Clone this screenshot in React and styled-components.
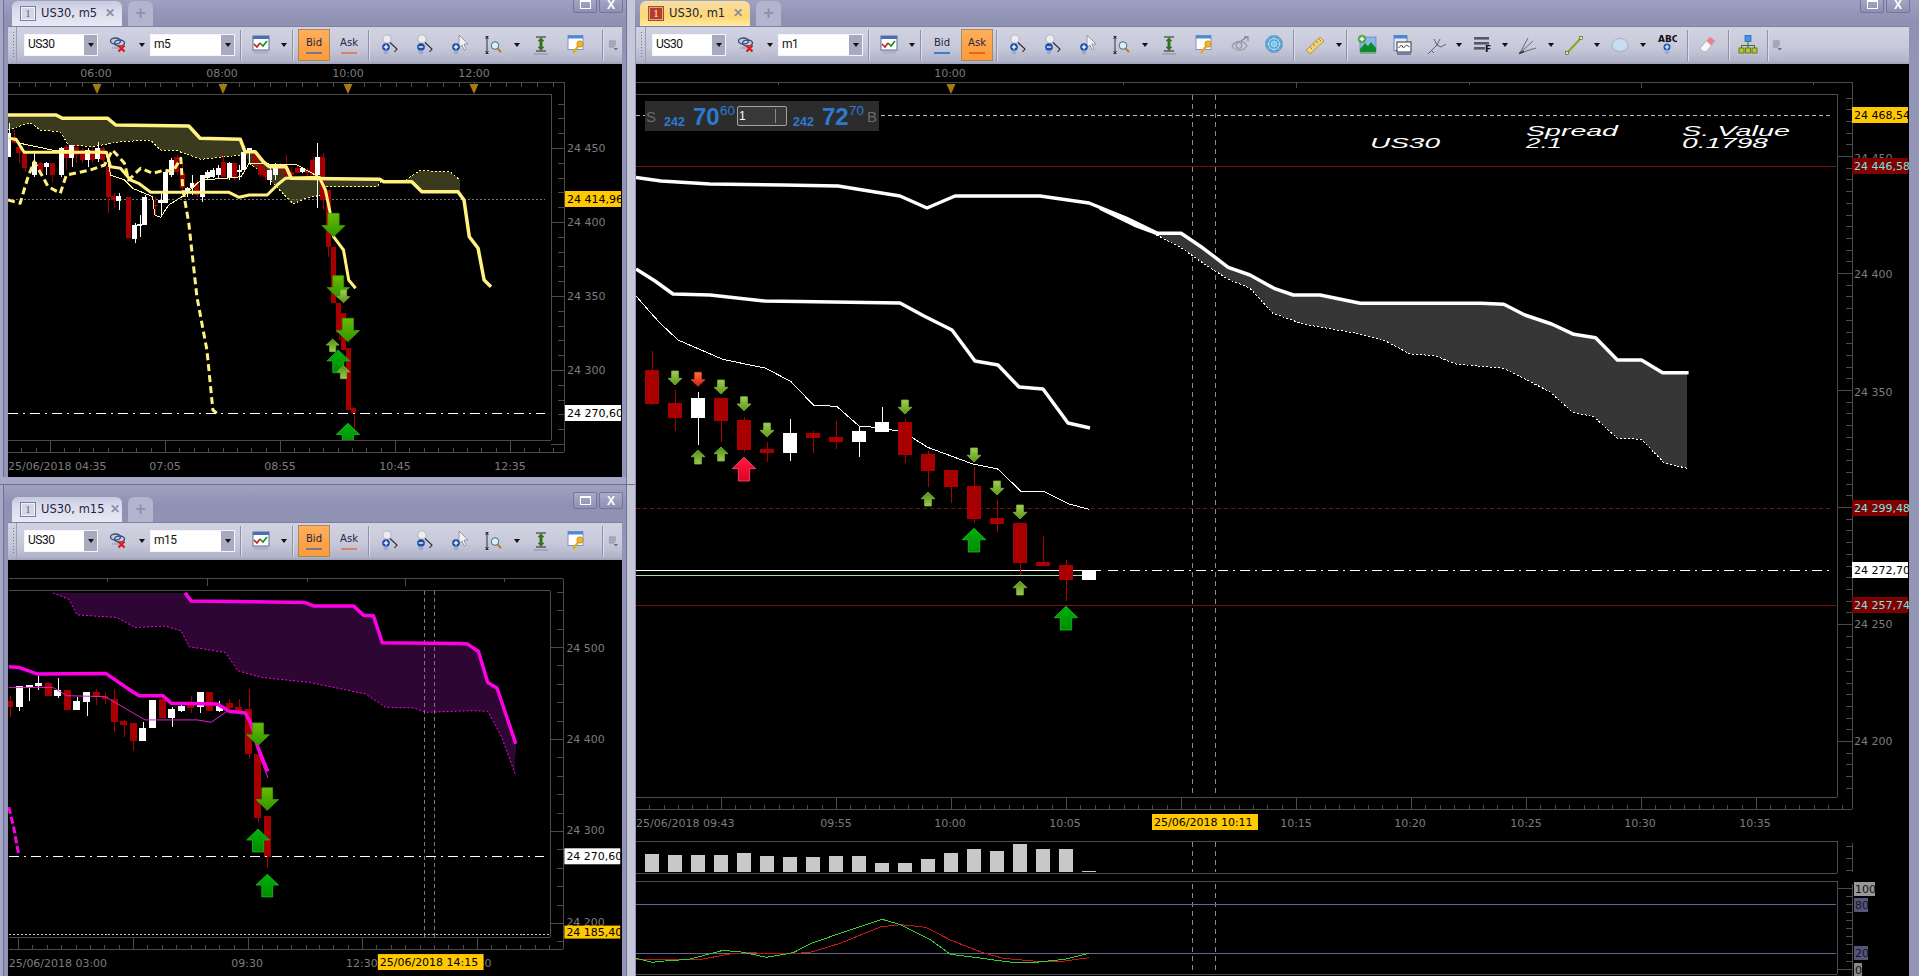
import React from "react";
import styled, { createGlobalStyle } from "styled-components";

const Global = createGlobalStyle`
  html, body { margin: 0; padding: 0; background: #000; overflow: hidden; }
  #root { width: 1919px; height: 976px; }
`;

const Page = styled.div`
  display: grid;
  grid-template-columns: 635px 1fr;
  width: 1919px;
  height: 976px;
  overflow: hidden;
  background: #b4b6ce;
  font-family: "DejaVu Sans", sans-serif;
`;
const LeftColumn = styled.div`
  display: flex;
  flex-direction: column;
  min-height: 0;
  background: #a6a9c6;
  box-shadow: inset -8px 0 0 #c6c8da, inset -9px 0 0 #6f7296;
`;
const Window = styled.section`
  display: flex;
  flex-direction: column;
  height: ${(p) => p.$h}px;
  margin-top: ${(p) => p.$top || 0}px;
  padding: ${(p) => p.$pad};
  box-sizing: border-box;
  background: linear-gradient(180deg, #9ea1c0, #8e91b2 20px, #9295b5 60px);
  border-top: ${(p) => (p.$lined ? "1px solid #6d7095" : "none")};
  box-shadow: ${(p) =>
    p.$side
      ? "inset -8px 0 0 #c6c8da, inset -9px 0 0 #6f7296, inset 3px 0 0 #a6a9c6, inset 4px 0 0 #6d7095"
      : "none"};
  flex: none;
`;
const TabRow = styled.div`
  display: flex;
  align-items: stretch;
  flex: none;
  height: ${(p) => p.$h}px;
  padding-top: ${(p) => p.$top}px;
  padding-left: ${(p) => p.$left}px;
  box-sizing: border-box;
`;
const Tab = styled.div`
  display: flex;
  align-items: center;
  width: 110px;
  box-sizing: border-box;
  padding: 0 0 1px 8px;
  gap: 5px;
  border-radius: 6px 6px 0 0;
  font-size: 11.5px;
  color: #23253e;
  white-space: nowrap;
  background: ${(p) =>
    p.$hot
      ? "linear-gradient(180deg, #f5dfa4 0, #fbd98a 35%, #ffd874 65%, #ffeaa8 100%)"
      : "linear-gradient(180deg, #c6c8de 0, #dcdded 40%, #e8e9f3 100%)"};
`;
const TabBadge = styled.span`
  display: flex;
  align-items: center;
  justify-content: center;
  width: 14px;
  height: 13px;
  flex: none;
  font: 10px "Liberation Serif", serif;
  color: ${(p) => (p.$hot ? "#fff" : "#555a78")};
  background: ${(p) => (p.$hot ? "#bb3a24" : "#d6d7e6")};
  border: 1px solid ${(p) => (p.$hot ? "#8a5a40" : "#7b7e9c")};
  box-shadow: inset 0 0 0 1px ${(p) => (p.$hot ? "#e8a080" : "#f2f2f8")};
`;
const TabClose = styled.span`
  margin-left: auto;
  margin-right: 7px;
  font: bold 12px "Liberation Sans", sans-serif;
  color: #8a8da6;
`;
const PlusTab = styled.div`
  width: 25px;
  margin-left: 6px;
  display: flex;
  align-items: center;
  justify-content: center;
  border-radius: 6px 6px 0 0;
  background: #b3b5cf;
  color: #8f92ad;
  font: bold 18px "Liberation Sans", sans-serif;
`;
const WinButtons = styled.div`
  display: flex;
  gap: 2px;
  margin-left: auto;
  margin-right: ${(p) => p.$right}px;
  margin-top: -5px;
  height: 17px;
  align-self: flex-start;
`;
const WinButton = styled.div`
  width: 24px;
  height: 17px;
  box-sizing: border-box;
  display: flex;
  align-items: center;
  justify-content: center;
  border: 1px solid #73769a;
  border-radius: 2px;
  background: linear-gradient(180deg, #a9abc7, #8d90b1);
  color: #fff;
  font: bold 12px "Liberation Sans", sans-serif;
`;
const MinGlyph = styled.span`
  width: 9px;
  height: 6px;
  border: 1px solid #fff;
  border-top-width: 2px;
`;

const Toolbar = styled.div`
  display: flex;
  align-items: center;
  flex: none;
  height: 38px;
  box-sizing: border-box;
  padding-bottom: 1px;
  background: linear-gradient(180deg, #d2d3e2 0, #c7c9da 55%, #b2b4c9 92%, #9fa1b8 100%);
  border-top: 1px solid #7d80a2;
`;
const Grip = styled.div`
  width: ${(p) => p.$w}px;
  height: 100%;
  box-sizing: border-box;
  margin-right: ${(p) => p.$gap}px;
  border-right: 1px solid #9c9eb6;
  flex: none;
  position: relative;
  &::before {
    content: "";
    display: block;
    width: 1px;
    height: 26px;
    margin: 5px 0 0 5px;
    background: repeating-linear-gradient(180deg, #777a96 0 1px, transparent 1px 3px);
  }
`;
const Combo = styled.div`
  width: ${(p) => p.$w}px;
  height: 22px;
  box-sizing: border-box;
  flex: none;
  display: flex;
  align-items: stretch;
  border: 1px solid #f4f4fa;
  background: #fff;
`;
const ComboText = styled.span`
  flex: 1;
  padding-left: 3px;
  font: 12px/19px Roboto, sans-serif;
  letter-spacing: -0.5px;
  color: #111;
`;
const ComboDrop = styled.span`
  width: 13px;
  display: flex;
  align-items: center;
  justify-content: center;
  background: #a9aac0;
`;
const Caret = styled.span`
  display: block;
  width: 0;
  height: 0;
  flex: none;
  border-left: 3.5px solid transparent;
  border-right: 3.5px solid transparent;
  border-top: 4px solid #111;
`;
const CaretBox = styled.div`
  width: ${(p) => p.$w}px;
  margin-right: ${(p) => p.$gap || 0}px;
  flex: none;
  display: flex;
  justify-content: center;
`;
const Sep = styled.div`
  width: ${(p) => p.$w || 6}px;
  height: 31px;
  margin-left: ${(p) => p.$gap || 0}px;
  flex: none;
  position: relative;
  &::after {
    content: "";
    display: block;
    width: 1px;
    height: 100%;
    margin: 0 auto;
    background: #8f91aa;
    box-shadow: 1px 0 0 #dcdde8;
  }
`;
const Tool = styled.div`
  width: ${(p) => p.$w}px;
  height: 26px;
  flex: none;
  display: flex;
  align-items: center;
  justify-content: center;
`;
const PriceSwitch = styled.div`
  width: ${(p) => p.$w}px;
  flex: none;
  display: flex;
  justify-content: center;
`;
const PriceButton = styled.div`
  width: 32px;
  height: 32px;
  box-sizing: border-box;
  display: flex;
  flex-direction: column;
  align-items: center;
  padding-top: 7px;
  font-size: 10px;
  line-height: 12px;
  color: #24264a;
  border: 1px solid ${(p) => (p.$on ? "#a48a5c" : "transparent")};
  background: ${(p) => (p.$on ? "linear-gradient(180deg, #ffae5c, #fd9a38)" : "transparent")};
`;
const PriceBar = styled.span`
  display: block;
  width: 16px;
  height: 2px;
  margin-top: 3px;
  background: ${(p) => p.$c};
`;

const ChartBox = styled.div`
  position: relative;
  flex: 1;
  min-height: 0;
  background: #000;
  overflow: hidden;
`;
const ChartSvg = styled.svg`
  display: block;
  width: 100%;
  height: 100%;
`;
const DefsSvg = styled.svg`
  position: absolute;
  width: 0;
  height: 0;
`;
const AxisText = styled.text`
  font: 11px "DejaVu Sans", sans-serif;
  fill: #7c7c7c;
`;
const TagText = styled.text`
  font: 11px "DejaVu Sans", sans-serif;
  fill: ${(p) => p.$c};
`;
const ScaleText = styled.text`
  font: 11px "DejaVu Sans", sans-serif;
  fill: ${(p) => p.$c};
`;
const SpreadText = styled.text`
  font: italic 15px "Liberation Sans", sans-serif;
  fill: #fff;
`;
const IconText = styled.text`
  font: bold 9px "DejaVu Sans", sans-serif;
  fill: #111;
`;

const Widget = styled.div`
  position: absolute;
  left: 9px;
  top: 37px;
  width: 234px;
  height: 30px;
  display: flex;
  align-items: center;
  background: #2c2c2c;
  font-family: "Liberation Sans", sans-serif;
  color: #2b7bd3;
`;
const WidgetSide = styled.span`
  width: ${(p) => p.$w}px;
  padding-left: ${(p) => p.$l}px;
  box-sizing: border-box;
  font-size: 15px;
  color: #6a6a6a;
  flex: none;
`;
const Quote = styled.div`
  display: flex;
  width: ${(p) => p.$w}px;
  margin-left: ${(p) => p.$l}px;
  flex: none;
  align-items: flex-start;
  height: 26px;
`;
const QuoteSmall = styled.span`
  font-size: 12.5px;
  font-weight: bold;
  width: 29px;
  padding-top: 12px;
  flex: none;
`;
const QuoteBig = styled.span`
  font-size: 24px;
  font-weight: bold;
  line-height: 27px;
  width: 27px;
  flex: none;
`;
const QuoteSup = styled.span`
  font-size: 13.5px;
  line-height: 15px;
  width: 16px;
  flex: none;
`;
const Qty = styled.div`
  width: 50px;
  height: 20px;
  box-sizing: border-box;
  margin-left: 1px;
  flex: none;
  display: flex;
  align-items: center;
  padding-left: 1px;
  border: 1px solid #a5a5a5;
  border-radius: 2px;
  background: #383838;
  color: #fff;
  font-size: 12px;
`;
const QtySpin = styled.span`
  margin-left: auto;
  width: 10px;
  height: 14px;
  border-left: 1px solid #888;
`;

/* ---------- icons ---------- */
const Svg = ({ children, w = 22, h = 22 }) => (
  <svg width={w} height={h} viewBox="0 0 22 22" aria-hidden="true">
    {children}
  </svg>
);
const Blue = ({ x, y, minus }) => (
  <g>
    <circle cx={x} cy={y} r="3.6" fill="#1b4fb4" stroke="#163a80" strokeWidth=".5" />
    <path d={`M${x - 2.2} ${y}h4.4`} stroke="#fff" strokeWidth="1.3" />
    {!minus && <path d={`M${x} ${y - 2.2}v4.4`} stroke="#fff" strokeWidth="1.3" />}
    <circle cx={x} cy={y + 5} r="2.4" fill="#7c92c6" opacity=".5" />
  </g>
);
const Mag = ({ minus }) => (
  <Svg>
    <circle cx="8" cy="5" r="4.2" fill="#ececf2" stroke="#b2b2be" />
    <path d="M11 8.500l7 6.500-2.500 3" fill="none" stroke="#2a2a30" strokeWidth="1.100" />
    <Blue x={7} y={13} minus={minus} />
  </Svg>
);
const IconLink = () => (
  <Svg>
    <ellipse cx="8.500" cy="7" rx="5" ry="3" fill="none" stroke="#35507c" strokeWidth="1.400" />
    <ellipse cx="12.500" cy="9" rx="5" ry="3" fill="none" stroke="#35507c" strokeWidth="1.400" />
    <path d="M5 14h9" stroke="#a3a5bc" strokeWidth="1.500" />
    <path d="M11.500 11.500l6 6m0-6l-6 6" stroke="#e01818" strokeWidth="2.300" />
  </Svg>
);
const IconChart = () => (
  <Svg>
    <rect x="3" y="2" width="16" height="14" fill="#fff" stroke="#5a6f9c" />
    <rect x="3" y="2" width="16" height="3" fill="#4a6fb0" />
    <path d="M4 10l3 3 3-4" fill="none" stroke="#c81e1e" strokeWidth="1.600" />
    <path d="M10 9l3 3 4-5" fill="none" stroke="#1a8a1a" strokeWidth="1.600" />
    <rect x="4" y="17" width="14" height="3" fill="#b0b2c4" />
  </Svg>
);
const IconCursor = () => (
  <Svg>
    <path d="M10 1v13l3-3 2 5 2-1-2-5h4z" fill="#eeeef4" stroke="#8a8a98" strokeWidth=".8" />
    <Blue x={7} y={13} />
  </Svg>
);
const IconFit = () => (
  <Svg>
    <path d="M4 3v16M2.500 5L4 3l1.500 2M2.500 17L4 19l1.500-2M2.500 2.500h3M2.500 19.500h3" fill="none" stroke="#222" strokeWidth=".9" />
    <circle cx="12" cy="11.500" r="3.800" fill="#d7eefb" stroke="#4a6880" strokeWidth="1" />
    <path d="M14.500 14.500l3.500 3.500" stroke="#b57a20" strokeWidth="1.800" />
  </Svg>
);
const IconAuto = () => (
  <Svg>
    <path d="M6 3h10M6 17h10" stroke="#222" strokeWidth="1.100" />
    <path d="M11 3.500l3 3.500H12.200v6h1.800L11 16.500l-3-3.500h1.800V7H8z" fill="#2d7a18" stroke="#175c0a" strokeWidth=".4" />
    <path d="M4 20h14" stroke="#9a9cb2" strokeWidth="1.500" />
  </Svg>
);
const IconKey = () => (
  <Svg>
    <rect x="3" y="1.500" width="15" height="14" fill="#fdfdff" stroke="#7f95c6" />
    <rect x="3" y="1.500" width="15" height="3" fill="#4f8ad8" />
    <circle cx="15" cy="10" r="3.200" fill="#f0b428" stroke="#b47e10" strokeWidth=".6" />
    <path d="M13 12.500L8 19" stroke="#e9a81c" strokeWidth="2.400" />
  </Svg>
);
const IconEye = () => (
  <Svg>
    <path d="M3 12c3-5 9-6 13-3l2 3c-3 5-11 6-15 0z" fill="none" stroke="#9a9cac" strokeWidth="1.300" />
    <circle cx="10" cy="11.500" r="2.800" fill="none" stroke="#9a9cac" strokeWidth="1.300" />
    <path d="M12 7l6-4m-3 0h4v4" fill="none" stroke="#85879a" strokeWidth="1.300" />
  </Svg>
);
const IconGlobe = () => (
  <Svg>
    <circle cx="11" cy="10" r="8.500" fill="#4fa2d6" stroke="#6f9fc0" />
    <circle cx="11" cy="10" r="5.500" fill="none" stroke="#bfe4f6" />
    <circle cx="11" cy="10" r="2.500" fill="none" stroke="#d8f0fa" />
    <path d="M11 1.500v17M2.500 10h17M5 4l12 12M17 4L5 16" stroke="#a8d6ee" strokeWidth=".6" />
  </Svg>
);
const IconRuler = () => (
  <Svg>
    <path d="M2 16L16 3l4 4L6 20z" fill="#ecd27a" stroke="#a88a34" strokeWidth=".8" />
    <path d="M6 13l2 2M9 10l2 2M12 7l2 2M15 5l2 2" stroke="#8d7126" strokeWidth=".8" />
  </Svg>
);
const IconImage = () => (
  <Svg>
    <rect x="4" y="3" width="16" height="15" fill="#8cb8e8" stroke="#4d75ad" strokeWidth=".6" />
    <path d="M4 15l5-6 3 3 3-4 5 6v4H4z" fill="#0e8a2c" />
    <rect x="4" y="18" width="16" height="2" fill="#7ea88c" />
    <circle cx="6" cy="5" r="3.800" fill="#5ab648" stroke="#2a7a20" strokeWidth=".5" />
    <path d="M3.800 5h4.400M6 2.800v4.400" stroke="#fff" strokeWidth="1.300" />
  </Svg>
);
const IconWindow = () => (
  <Svg>
    <rect x="3" y="1.500" width="13" height="15" fill="#e6eaf6" stroke="#5f86c6" />
    <rect x="3" y="1.500" width="13" height="3" fill="#4a86d8" />
    <rect x="6" y="8" width="14" height="10" fill="#fff" stroke="#333" />
    <path d="M7.500 14l3-3 2 3 3-3 3 2" fill="none" stroke="#444" />
    <path d="M6 20h14" stroke="#3a5f9c" strokeWidth="1.300" />
  </Svg>
);
const IconFork = () => (
  <Svg>
    <path d="M2 20l9-9M8 5l3 6 3-6M11 11l4 2 5-3M5 16l3 3" fill="none" stroke="#555666" strokeWidth=".9" />
  </Svg>
);
const IconList = () => (
  <Svg>
    <rect x="3" y="3" width="15" height="2.600" fill="#555768" />
    <rect x="3" y="8" width="15" height="2.600" fill="#555768" />
    <rect x="3" y="13" width="11" height="2.600" fill="#555768" />
    <path d="M5 4.300h.1M16 4.300h.1M5 9.300h.1M16 9.300h.1M5 14.300h.1" stroke="#d8d8e4" strokeWidth="1.200" />
    <IconText x="14" y="18">F</IconText>
  </Svg>
);
const IconFan = () => (
  <Svg>
    <path d="M3 19L11 4M3 19L16 7M3 19l16-5" fill="none" stroke="#5c5d6c" strokeWidth=".9" />
    <path d="M2 19.500l5-2" stroke="#333" strokeWidth="1.500" />
  </Svg>
);
const IconLine = () => (
  <Svg>
    <path d="M4 19L18 4" stroke="#8aa822" strokeWidth="2" />
    <rect x="2.500" y="17.500" width="3" height="3" fill="#dfe8a0" stroke="#4c5c10" strokeWidth=".6" />
    <rect x="16.500" y="2.500" width="3" height="3" fill="#dfe8a0" stroke="#4c5c10" strokeWidth=".6" />
  </Svg>
);
const IconOval = () => (
  <Svg>
    <ellipse cx="11" cy="11" rx="8" ry="6.500" fill="#c9dcf0" stroke="#9fb4cc" />
  </Svg>
);
const IconAbc = () => (
  <Svg>
    <IconText x="3" y="8">ABC</IconText>
    <circle cx="12" cy="13" r="3.500" fill="#1e56b4" />
    <path d="M9.800 13h4.400M12 10.800v4.400" stroke="#fff" strokeWidth="1.200" />
    <circle cx="12" cy="18" r="2.400" fill="#8ea2d0" opacity=".7" />
  </Svg>
);
const IconEraser = () => (
  <Svg>
    <path d="M3 14L13 3l5 4L9 18l-4-1z" fill="#f7f7fa" stroke="#a0a0b0" strokeWidth=".7" />
    <path d="M9.500 7L13 3l5 4-4 4.500z" fill="#ee7f90" />
  </Svg>
);
const IconTree = () => (
  <Svg>
    <rect x="8" y="1.500" width="6" height="6" fill="#3f98ea" stroke="#1e5ea8" strokeWidth=".7" />
    <path d="M11 7.500v4M4.500 14v-2.500h13V14M11 11.500V14" fill="none" stroke="#3f6f18" />
    <rect x="2" y="14" width="5" height="5" fill="#b8c63c" stroke="#52660c" strokeWidth=".8" />
    <rect x="8.500" y="14" width="5" height="5" fill="#b8c63c" stroke="#52660c" strokeWidth=".8" />
    <rect x="15" y="14" width="5" height="5" fill="#b8c63c" stroke="#52660c" strokeWidth=".8" />
  </Svg>
);
const IconMore = () => (
  <Svg>
    <path d="M5 6h9M5 8.500h9M5 11h9M5 13.500h7" stroke="#6e7088" strokeWidth="1" />
    <path d="M11 15h6l-3 3z" fill="#6e7088" />
  </Svg>
);

/* ---------- toolbar ---------- */
const WindowBar = ({ symbol, frame, on, bars, wide }) => (
  <Toolbar>
    <Grip $w={wide ? 10 : 9} $gap={wide ? 6 : 7} />
    <Combo $w={74}>
      <ComboText>{symbol}</ComboText>
      <ComboDrop><Caret /></ComboDrop>
    </Combo>
    <Tool $w={40}><IconLink /></Tool>
    <CaretBox $w={8} $gap={4}><Caret /></CaretBox>
    <Combo $w={85}>
      <ComboText>{frame}</ComboText>
      <ComboDrop><Caret /></ComboDrop>
    </Combo>
    <Sep $gap={2} />
    <Tool $w={36}><IconChart /></Tool>
    <CaretBox $w={10}><Caret /></CaretBox>
    <Sep />
    <PriceSwitch $w={38}>
      <PriceButton $on={on === "bid"}>Bid<PriceBar $c={bars[0]} /></PriceButton>
    </PriceSwitch>
    <PriceSwitch $w={32}>
      <PriceButton $on={on === "ask"}>Ask<PriceBar $c={bars[1]} /></PriceButton>
    </PriceSwitch>
    <Sep $w={7} />
    <Tool $w={36}><Mag /></Tool>
    <Tool $w={34}><Mag minus /></Tool>
    <Tool $w={36}><IconCursor /></Tool>
    <Tool $w={32}><IconFit /></Tool>
    <CaretBox $w={14}><Caret /></CaretBox>
    <Tool $w={34}><IconAuto /></Tool>
    <Tool $w={36}><IconKey /></Tool>
    {wide ? (
      <>
        <Tool $w={36}><IconEye /></Tool>
        <Tool $w={32}><IconGlobe /></Tool>
        <Sep />
        <Tool $w={38}><IconRuler /></Tool>
        <CaretBox $w={9}><Caret /></CaretBox>
        <Sep />
        <Tool $w={36}><IconImage /></Tool>
        <Tool $w={34}><IconWindow /></Tool>
        <Tool $w={36}><IconFork /></Tool>
        <CaretBox $w={8}><Caret /></CaretBox>
        <Tool $w={38}><IconList /></Tool>
        <CaretBox $w={8}><Caret /></CaretBox>
        <Tool $w={38}><IconFan /></Tool>
        <CaretBox $w={8}><Caret /></CaretBox>
        <Tool $w={38}><IconLine /></Tool>
        <CaretBox $w={8}><Caret /></CaretBox>
        <Tool $w={38}><IconOval /></Tool>
        <CaretBox $w={8}><Caret /></CaretBox>
        <Tool $w={37}><IconAbc /></Tool>
        <Sep />
        <Tool $w={35}><IconEraser /></Tool>
        <Sep />
        <Tool $w={34}><IconTree /></Tool>
        <Sep $w={4} />
        <Tool $w={17}><IconMore /></Tool>
      </>
    ) : (
      <>
        <Sep $gap={5} />
        <Tool $w={17}><IconMore /></Tool>
      </>
    )}
  </Toolbar>
);

const WindowTabs = ({ title, hot, top, h, left, right }) => (
  <TabRow $top={top} $h={h} $left={left}>
    <Tab $hot={hot}>
      <TabBadge $hot={hot}>1</TabBadge>
      {title}
      <TabClose>✕</TabClose>
    </Tab>
    <PlusTab>+</PlusTab>
    <WinButtons $right={right}>
      <WinButton><MinGlyph /></WinButton>
      <WinButton>X</WinButton>
    </WinButtons>
  </TabRow>
);

/* ---------- chart primitives ---------- */
const pts = (list, f) => list.map(([x, y]) => f(x, y).map((v) => v.toFixed(1)).join(",")).join(" ");
const z4 = (x, y) => [x / 2.489, 100 + y / 3];
const z5 = (x, y) => [x / 2.489, 480 + y / 3];
const z6 = (x, y) => [636 + x / 3, 340 + y / 3];
const z7 = (x, y) => [636 + x / 2.45, 780 + y / 3];
const z12 = (x, y) => [1100 + x / 2.613, 160 + y / 3];
const id = (x, y) => [x, y];

const Line = ({ p, f = id, c, w = 1, dash, fill = "none" }) => (
  <polyline
    points={pts(p, f)}
    fill={fill}
    stroke={c}
    strokeWidth={w}
    strokeDasharray={dash}
    strokeLinejoin="round"
    shapeRendering={w === 1 ? "crispEdges" : undefined}
  />
);
const Crisp = ({ x1, y1, x2, y2, c = "#4b4b4b", dash }) => (
  <line x1={x1} y1={y1} x2={x2} y2={y2} stroke={c} strokeDasharray={dash} shapeRendering="crispEdges" />
);
const Candles = ({ data, f, w }) =>
  data.map(([x, wt, wb, bt, bb, c], i) => {
    const [cx, y1] = f(x, wt);
    const [, y2] = f(x, wb);
    const [, b1] = f(x, bt);
    const [, b2] = f(x, bb);
    const col = c === "R" ? "#a80000" : "#ffffff";
    return (
      <g key={i} shapeRendering="crispEdges">
        <line x1={Math.round(cx) + 0.5} x2={Math.round(cx) + 0.5} y1={y1} y2={y2} stroke={col} />
        <rect x={Math.round(cx - w / 2)} y={b1} width={w} height={Math.max(b2 - b1, 1)} fill={col} />
      </g>
    );
  });

const Arrow = ({ x, y0, y1, up, tone, f = id }) => {
  const [cx, a] = f(x, y0);
  const [, b] = f(x, y1);
  const h = b - a;
  const w = h;
  const s = w * 0.24;
  const mk = (yy) => (up ? a + b - yy : yy);
  const yh = a + h * 0.52;
  const p = [
    [cx - s, a], [cx + s, a], [cx + s, yh], [cx + w / 2, yh], [cx, b], [cx - w / 2, yh], [cx - s, yh],
  ].map(([px, py]) => `${px.toFixed(1)},${mk(py).toFixed(1)}`).join(" ");
  return <polygon points={p} fill={`url(#arrow-${tone}${up ? "-up" : ""})`} stroke={`url(#edge-${tone})`} strokeWidth=".8" />;
};

const Grad = ({ name, a, b, up }) => (
  <linearGradient id={`arrow-${name}${up ? "-up" : ""}`} x1="0" y1={up ? 1 : 0} x2="0" y2={up ? 0 : 1}>
    <stop offset="0" stopColor={a} />
    <stop offset="1" stopColor={b} />
  </linearGradient>
);
const Edge = ({ name, c }) => (
  <linearGradient id={`edge-${name}`} x1="0" y1="0" x2="0" y2="1">
    <stop offset="0" stopColor={c} />
    <stop offset="1" stopColor={c} />
  </linearGradient>
);
const ArrowDefs = () => (
  <DefsSvg aria-hidden="true">
    <defs>
      <Grad name="lime" a="#69bd00" b="#2f9400" />
      <Grad name="green" a="#008c00" b="#00b010" up />
      <Grad name="small" a="#a2cf55" b="#5a9a14" />
      <Grad name="small" a="#9ccb52" b="#4f8f12" up />
      <Grad name="red" a="#e00028" b="#ff1a40" up />
      <Grad name="smallred" a="#ff7040" b="#d02010" />
      <Edge name="lime" c="#3f9800" />
      <Edge name="green" c="#19c019" />
      <Edge name="small" c="#7eb03a" />
      <Edge name="red" c="#ff5068" />
      <Edge name="smallred" c="#e04020" />
    </defs>
  </DefsSvg>
);

const Tag = ({ x, y, w, h = 16, bg, c, children }) => (
  <g>
    <rect x={x} y={y - h / 2} width={w} height={h} fill={bg} />
    <TagText x={x + 2} y={y + 4} $c={c}>{children}</TagText>
  </g>
);
const Gold = ({ x, y }) => (
  <polygon points={`${x - 4.5},${y} ${x + 4.5},${y} ${x},${y + 10}`} fill="#a57c12" />
);
const range = (a, b, step) => {
  const r = [];
  for (let v = a; v <= b + 0.001; v += step) r.push(v);
  return r;
};
const BottomRuler = ({ y0, y1, x0, x1, xin, majors, step }) => (
  <g>
    <rect x={x0} y={y0 + 0.5} width={x1 - x0} height={y1 - y0 + 1} fill="#000" />
    <Crisp x1={x0} y1={y0} x2={xin} y2={y0} />
    <Crisp x1={x0} y1={y1} x2={x1} y2={y1} />
    {majors.map((m) => <Crisp key={m} x1={m} y1={y0} x2={m} y2={y1} />)}
    {range(x0 + ((majors[0] - x0) % step), x1 - 2, step).map((v) => (
      <Crisp key={v} x1={Math.round(v)} y1={y1 - 4} x2={Math.round(v)} y2={y1} />
    ))}
  </g>
);
const PriceAxis = ({ xin, x1, y0, y1, anchor, step, every }) => {
  const ticks = [];
  const n0 = Math.floor((anchor - y0) / step);
  for (let i = -n0; anchor + i * step <= y1; i++) {
    const y = Math.round(anchor + i * step);
    const major = ((i % every) + every) % every === 0;
    ticks.push(<Crisp key={i} x1={major ? xin : x1 - 6} y1={y} x2={x1} y2={y} />);
  }
  return <g>{ticks}</g>;
};

/* ---------- m5 chart ---------- */
const m5Candles = [
  [22,70,170,100,170,"W"],[35,90,130,115,130,"R"],[47,125,190,140,160,"R"],[62,155,215,160,205,"R"],
  [85,160,230,185,225,"W"],[100,185,225,190,215,"R"],[115,185,225,190,200,"W"],[130,190,245,190,225,"R"],
  [152,140,230,145,225,"W"],[165,135,210,140,175,"R"],[178,135,200,135,175,"W"],[190,135,190,140,165,"R"],
  [205,145,190,150,180,"R"],[218,145,200,150,180,"W"],[230,140,190,150,180,"R"],[243,125,185,145,178,"W"],
  [256,140,190,145,180,"R"],[270,170,340,200,290,"R"],[283,280,325,288,300,"R"],[296,280,330,288,302,"W"],
  [320,290,415,290,415,"R"],[335,370,430,375,418,"W"],[348,345,410,372,377,"W"],[360,285,375,290,375,"W"],
  [387,290,345,315,318,"R"],[400,280,345,300,310,"W"],[413,210,310,215,310,"W"],[426,175,230,180,225,"W"],
  [440,165,225,170,215,"R"],[453,190,290,220,265,"R"],[466,260,290,265,280,"W"],[478,225,285,250,265,"W"],
  [490,240,290,250,285,"R"],[503,225,305,225,290,"W"],[516,210,240,215,235,"W"],[530,205,235,210,230,"W"],
  [543,195,235,205,225,"W"],[556,155,230,185,230,"R"],[570,185,240,190,235,"W"],[583,190,240,190,230,"R"],
  [596,195,240,210,215,"W"],[607,145,215,155,210,"W"],[620,145,190,145,160,"W"],[635,155,200,160,195,"R"],
  [648,180,230,190,225,"R"],[660,195,240,210,230,"R"],[672,200,255,210,240,"W"],[685,190,240,195,225,"W"],
  [698,190,230,200,210,"R"],[712,165,240,205,225,"R"],[725,200,240,215,225,"R"],[740,195,220,205,220,"R"],
  [752,200,220,205,215,"W"],[765,205,230,210,220,"R"],[778,170,230,180,225,"R"],[790,130,325,170,225,"W"],
  [803,160,330,170,300,"R"],[817,270,470,270,440,"R"],[830,440,610,440,610,"R"],[843,610,720,610,700,"R"],
  [855,640,750,640,750,"R"],[868,745,930,745,930,"R"],[880,925,1000,925,940,"R"],
];
const m5Top = [[20,45],[140,45],[155,55],[268,55],[288,75],[470,78],[498,115],[598,118],[610,155],[635,155],[655,185],[670,200],[712,200],[725,235],[945,238],[955,245],[1025,245],[1050,275],[1140,275],[1155,300],[1168,410],[1190,445],[1205,540],[1222,560]];
const m5Kijun = [[20,115],[40,118],[60,157],[265,157],[275,200],[300,205],[325,240],[345,250],[375,277],[570,277],[595,292],[620,285],[665,285],[690,255],[710,235],[795,232],[810,270],[822,340],[830,410],[855,450],[868,540],[885,565]];
const m5Thin = [[20,110],[50,130],[130,150],[265,160],[275,225],[310,240],[330,265],[380,290],[385,345],[400,352],[420,315],[460,285],[500,240],[560,235],[600,230],[620,190],[740,195],[800,235]];
const m5Chikou = [[20,300],[50,310],[70,230],[85,185],[120,260],[150,280],[165,225],[225,210],[260,195],[280,150],[310,190],[320,240],[350,205],[380,220],[410,210],[430,215],[450,175],[455,265],[470,370],[490,590],[515,750],[530,930],[540,940]];
const m5Cloud1 = [[20,45],[140,45],[155,55],[268,55],[288,75],[470,78],[498,115],[598,118],[610,155],[600,165],[560,170],[500,178],[440,152],[400,150],[375,120],[300,125],[230,140],[170,135],[150,95],[100,90],[75,68],[20,90]];
const m5Cloud2 = [[610,155],[635,155],[655,185],[670,200],[712,200],[725,235],[945,238],[940,260],[810,260],[800,285],[760,295],[730,312],[680,250],[650,215],[620,190]];
const m5Cloud3 = [[1010,240],[1045,212],[1120,215],[1145,240],[1145,272],[1050,275],[1025,245]];
const m5CloudLine1 = [[20,90],[75,68],[100,90],[150,95],[170,135],[230,140],[300,125],[375,120],[400,150],[440,152],[500,178],[560,170],[600,165]];
const m5CloudLine2 = [[620,190],[650,215],[680,250],[730,312],[760,295],[800,285],[810,260],[940,260],[950,240]];

const M5Chart = () => (
  <ChartSvg viewBox="8 64 614 413">
    <Line p={m5Cloud1} f={z4} c="none" fill="#3a3a1e" />
    <Line p={m5Cloud2} f={z4} c="none" fill="#3a3a1e" />
    <Line p={m5Cloud3} f={z4} c="none" fill="#3a3a1e" />
    <Line p={m5CloudLine1} f={z4} c="#fff27f" dash="2 2" />
    <Line p={m5CloudLine2} f={z4} c="#fff27f" dash="2 2" />
    <Line p={m5Cloud3.slice(0, 4)} f={z4} c="#fff27f" dash="2 2" />
    <Crisp x1={8} y1={199} x2={545} y2={199} c="#777" dash="2 2" />
    <Candles data={m5Candles} f={z4} w={5} />
    <Line p={m5Thin} f={z4} c="#fffaa8" />
    <Line p={m5Top} f={z4} c="#fff27f" w={3.500} />
    <Line p={m5Kijun} f={z4} c="#fff27f" w={3} />
    <Line p={m5Chikou} f={z4} c="#fff27f" w={3} dash="7 4" />
    <Crisp x1={8} y1={413} x2={545} y2={413} c="#fff" dash="10 5 2 5" />
    <Arrow f={z4} x={830} y0={340} y1={410} tone="lime" />
    <Arrow f={z4} x={842} y0={527} y1={595} tone="lime" />
    <Arrow f={z4} x={855} y0={570} y1={608} tone="small" />
    <Arrow f={z4} x={866} y0={655} y1={725} tone="lime" />
    <Arrow f={z4} x={842} y0={750} y1={818} tone="green" up />
    <Arrow f={z4} x={828} y0={717} y1={755} tone="small" up />
    <Arrow f={z4} x={855} y0={797} y1={836} tone="small" up />
    <Arrow f={z4} x={866} y0={970} y1={1040} tone="green" up />
    <BottomRuler y0={440} y1={452} x0={8} x1={564} xin={551} majors={[50, 165, 280, 395, 510]} step={14.375} />
    <Crisp x1={8} y1={82} x2={564} y2={82} />
    <Crisp x1={8} y1={94} x2={551} y2={94} />
    <Crisp x1={551} y1={94} x2={551} y2={440} />
    <Crisp x1={564} y1={82} x2={564} y2={452} />
    {range(19, 560, 15.7).map((v) => <Crisp key={v} x1={Math.round(v)} y1={82} x2={Math.round(v)} y2={87} />)}
    {[97, 223, 348, 474].map((v) => <Gold key={v} x={v} y={84} />)}
    <PriceAxis xin={551} x1={564} y0={94} y1={452} anchor={148} step={14.8} every={5} />
    <AxisText x={96} y={77} textAnchor="middle">06:00</AxisText>
    <AxisText x={222} y={77} textAnchor="middle">08:00</AxisText>
    <AxisText x={348} y={77} textAnchor="middle">10:00</AxisText>
    <AxisText x={474} y={77} textAnchor="middle">12:00</AxisText>
    <AxisText x={8} y={470}>25/06/2018 04:35</AxisText>
    <AxisText x={165} y={470} textAnchor="middle">07:05</AxisText>
    <AxisText x={280} y={470} textAnchor="middle">08:55</AxisText>
    <AxisText x={395} y={470} textAnchor="middle">10:45</AxisText>
    <AxisText x={510} y={470} textAnchor="middle">12:35</AxisText>
    <AxisText x={567} y={152}>24 450</AxisText>
    <AxisText x={567} y={226}>24 400</AxisText>
    <AxisText x={567} y={300}>24 350</AxisText>
    <AxisText x={567} y={374}>24 300</AxisText>
    <Tag x={565} y={199} w={56} bg="#ffc800" c="#000">24 414,96</Tag>
    <Tag x={565} y={413} w={56} bg="#fff" c="#000">24 270,60</Tag>
  </ChartSvg>
);

/* ---------- m15 chart ---------- */
const m15Candles = [
  [22,645,710,660,680,"R"],[46,615,690,615,678,"W"],[70,612,662,612,618,"W"],[93,585,628,608,615,"W"],
  [118,605,645,608,645,"R"],[141,592,652,627,645,"W"],[165,627,687,627,687,"R"],[189,650,687,662,687,"W"],
  [213,633,707,633,665,"W"],[237,625,672,633,648,"R"],[260,635,670,645,655,"R"],[284,625,755,655,725,"R"],
  [308,718,770,720,732,"R"],[332,728,810,728,780,"R"],[355,725,780,742,780,"W"],[379,657,743,657,743,"W"],
  [404,650,712,655,712,"R"],[428,680,738,685,712,"W"],[451,672,695,675,690,"W"],[475,645,697,672,682,"R"],
  [499,635,698,635,680,"W"],[522,635,690,635,690,"R"],[546,660,695,675,690,"W"],[570,655,695,668,682,"R"],
  [594,655,695,678,690,"R"],[619,625,835,685,820,"R"],[642,820,1028,820,1012,"R"],[665,1008,1163,1008,1130,"R"],
];
const m15Kijun = [[20,558],[45,560],[92,580],[262,578],[325,630],[345,645],[405,645],[425,668],[540,670],[570,692],[610,697],[625,730],[640,795],[666,873]];
const m15Thin = [[20,620],[130,620],[165,645],[260,648],[360,718],[490,718],[525,725],[565,692],[610,697],[630,760],[650,840],[667,893]];
const m15Top = [[460,336],[475,360],[760,365],[780,375],[880,375],[905,403],[930,405],[952,486],[1140,488],[1165,490],[1192,512],[1215,605],[1238,622],[1285,790]];
const m15Low = [[130,336],[170,355],[190,402],[290,410],[335,440],[410,436],[450,450],[470,498],[560,515],[592,570],[650,590],[770,605],[910,640],[960,680],[1030,682],[1060,695],[1180,690],[1215,692],[1250,770],[1283,880]];
const m15Cloud = [...m15Top, ...[...m15Low].reverse()];

const M15Chart = () => (
  <ChartSvg viewBox="8 559 614 417">
    <Line p={m15Cloud} f={z5} c="none" fill="#2e0634" />
    <Line p={m15Low} f={z5} c="#ff00e6" dash="2 2" />
    <Crisp x1={425} y1={590} x2={425} y2={937} c="#7a7a7a" dash="4 3" />
    <Crisp x1={435} y1={590} x2={435} y2={937} c="#7a7a7a" dash="4 3" />
    <Candles data={m15Candles} f={z5} w={7} />
    <Line p={m15Thin} f={z5} c="#e020cc" />
    <Line p={m15Kijun} f={z5} c="#ff00e6" w={3.500} />
    <Line p={m15Top} f={z5} c="#ff00e6" w={3.500} />
    <Line p={[[20,980],[32,1040],[45,1125]]} f={z5} c="#ff00e6" w={3} dash="7 3" />
    <Crisp x1={8} y1={856} x2={545} y2={856} c="#fff" dash="10 5 2 5" />
    <Crisp x1={8} y1={934} x2={551} y2={934} c="#ccc" dash="2 2" />
    <Arrow f={z5} x={642} y0={727} y1={795} tone="lime" />
    <Arrow f={z5} x={665} y0={922} y1={990} tone="lime" />
    <Arrow f={z5} x={642} y0={1046} y1={1115} tone="green" up />
    <Arrow f={z5} x={665} y0={1182} y1={1250} tone="green" up />
    <BottomRuler y0={937} y1={949} x0={8} x1={564} xin={551} majors={[18, 133, 248, 363, 478]} step={14.375} />
    <Crisp x1={8} y1={578} x2={564} y2={578} />
    <Crisp x1={8} y1={590} x2={551} y2={590} />
    <Crisp x1={551} y1={590} x2={551} y2={937} />
    <Crisp x1={564} y1={578} x2={564} y2={949} />
    {[[107, 581], [207, 585], [307, 581], [406, 585], [505, 581]].map(([x, y]) => (
      <Crisp key={x} x1={x} y1={578} x2={x} y2={y} />
    ))}
    <PriceAxis xin={551} x1={564} y0={590} y1={949} anchor={647} step={18.4} every={5} />
    <AxisText x={567} y={651}>24 500</AxisText>
    <AxisText x={567} y={742}>24 400</AxisText>
    <AxisText x={567} y={834}>24 300</AxisText>
    <AxisText x={567} y={926}>24 200</AxisText>
    <AxisText x={8} y={967}>25/06/2018 03:00</AxisText>
    <AxisText x={247} y={967} textAnchor="middle">09:30</AxisText>
    <AxisText x={362} y={967} textAnchor="middle">12:30</AxisText>
    <AxisText x={476} y={967} textAnchor="middle">15:30</AxisText>
    <Tag x={565} y={856} w={56} bg="#fff" c="#000">24 270,60</Tag>
    <Tag x={565} y={932} w={56} h={13} bg="#ffc800" c="#000">24 185,40</Tag>
    <Tag x={378} y={962} w={106} bg="#ffc800" c="#000">25/06/2018 14:15</Tag>
  </ChartSvg>
);

/* ---------- m1 chart ---------- */
const m1Candles = [
  [48,33,195,90,192,"R"],[117,150,272,190,233,"R"],[186,155,315,174,233,"W"],[255,175,305,175,242,"R"],
  [324,230,335,240,330,"R"],[393,305,365,327,339,"R"],[462,238,362,279,339,"W"],[531,272,340,279,294,"R"],
  [600,243,327,291,306,"R"],[669,258,350,274,306,"W"],[738,201,275,246,276,"W"],[807,238,368,246,345,"R"],
  [876,333,440,342,393,"R"],[945,390,490,390,441,"R"],[1014,380,548,438,537,"R"],[1083,480,575,534,552,"R"],
  [1152,549,705,549,669,"R"],[1221,588,678,666,678,"R"],[1290,660,782,675,720,"R"],[1359,692,720,692,720,"W"],
];
const smallDown = [[117,93,135],[255,120,162],[324,170,212],[393,249,291],[807,180,222],[1014,324,366],[1083,423,465],[1152,495,537]];
const smallUp = [[186,330,372],[255,321,363],[876,456,498],[1152,723,765]];
const bigUp = [[1014,565,636],[1290,799,870]];
const mainHead = [[636,177.500],[661,181],[710,184],[783,185],[838,186],[900,196],[927,208],[955,196],[1040,196],[1089,203],[1126,218],[1157,233]];
const cloudTop = [[0,145],[90,195],[148,220],[212,220],[270,265],[335,322],[392,345],[455,385],[505,405],[575,405],[680,430],[995,430],[1055,433],[1110,465],[1180,492],[1238,523],[1295,533],[1352,600],[1415,600],[1470,638],[1538,638]];
const cloudLow = [[148,225],[210,262],[270,310],[335,358],[392,385],[452,460],[530,492],[680,522],[750,545],[810,582],[875,587],[930,612],[1055,625],[1175,695],[1235,757],[1290,770],[1352,835],[1415,838],[1475,910],[1535,925]];
const cloudFill = [...cloudTop.slice(2, 20), [1535, 638], ...[...cloudLow].reverse()];
const thinStart = [[636,296],[650,312],[660,323],[678,340]];
const thinZ = [[126,0],[260,58],[390,85],[465,125],[533,196],[602,199],[669,258],[715,262],[800,275],[875,322],[1010,372],[1085,387],[1155,454],[1222,454],[1300,492],[1358,508]];
const midHead = [[636,269],[655,281],[673,294],[710,295],[765,301],[900,303],[924,316],[952,330],[975,361],[998,365],[1019,387],[1043,389],[1068,423],[1090,428]];
const volTops = [222,225,225,225,219,228,231,231,228,228,249,249,237,219,207,213,192,207,207];
const stochGreen = [[0,535],[40,547],[70,543],[130,538],[210,512],[250,514],[320,532],[385,518],[430,490],[500,460],[603,418],[650,435],[720,478],[770,523],[830,532],[890,542],[930,548],[970,548],[1010,543],[1050,538],[1110,520]];
const stochRed = [[0,538],[70,538],[150,540],[230,522],[270,518],[380,522],[430,516],[500,490],[600,440],[650,434],[710,442],[770,480],[850,518],[900,535],[980,544],[1050,543],[1110,533]];

const M1Chart = () => (
  <ChartSvg viewBox="636 64 1273 912">
    <Crisp x1={636} y1={115} x2={1832} y2={115} c="#b8b8b8" dash="4 3" />
    <Crisp x1={636} y1={166} x2={1836} y2={166} c="#7a0f0f" />
    <Crisp x1={636} y1={508} x2={1832} y2={508} c="#7a0f0f" dash="4 3" />
    <Crisp x1={636} y1={605} x2={1836} y2={605} c="#7a0f0f" />
    {[1192, 1215].map((x) => (
      <g key={x}>
        <Crisp x1={x} y1={95} x2={x} y2={797} c="#8a8a8a" dash="5 4" />
        <Crisp x1={x} y1={842} x2={x} y2={872} c="#8a8a8a" dash="5 4" />
        <Crisp x1={x} y1={884} x2={x} y2={975} c="#8a8a8a" dash="5 4" />
      </g>
    ))}
    <Line p={cloudFill} f={z12} c="none" fill="#363636" />
    <Line p={cloudLow} f={z12} c="#fff" dash="2 2" />
    <Line p={mainHead} c="#fff" w={3.500} />
    <Line p={cloudTop} f={z12} c="#fff" w={3.500} />
    <Line p={midHead} c="#fff" w={3.500} />
    <Line p={thinStart} c="#fff" />
    <Line p={thinZ} f={z6} c="#fff" />
    <Crisp x1={636} y1={570} x2={1101} y2={570} c="#fff" />
    <Crisp x1={636} y1={575} x2={1088} y2={575} c="#a6e4a6" />
    <Crisp x1={1108} y1={570} x2={1830} y2={570} c="#fff" dash="10 5 2 5" />
    <Candles data={m1Candles} f={z6} w={14} />
    {smallDown.map(([x, a, b]) => <Arrow key={`${x}d`} f={z6} x={x} y0={a} y1={b} tone="small" />)}
    <Arrow f={z6} x={186} y0={97} y1={139} tone="smallred" />
    {smallUp.map(([x, a, b]) => <Arrow key={`${x}u`} f={z6} x={x} y0={a} y1={b} tone="small" up />)}
    <Arrow f={z6} x={324} y0={352} y1={423} tone="red" up />
    {bigUp.map(([x, a, b]) => <Arrow key={`${x}b`} f={z6} x={x} y0={a} y1={b} tone="green" up />)}

    <Crisp x1={636} y1={82} x2={1852} y2={82} />
    <Crisp x1={636} y1={94} x2={1837} y2={94} />
    <Crisp x1={1837} y1={94} x2={1837} y2={797} />
    <Crisp x1={1852} y1={82} x2={1852} y2={809} />
    {[[778, 85], [1123, 85], [1296, 88], [1469, 85], [1641, 88], [1813, 85]].map(([x, y]) => (
      <Crisp key={x} x1={x} y1={82} x2={x} y2={y} />
    ))}
    <Gold x={951} y={84} />
    <AxisText x={950} y={77} textAnchor="middle">10:00</AxisText>
    <BottomRuler y0={797} y1={809} x0={636} x1={1852} xin={1837} majors={[721, 836, 951, 1066, 1181, 1296, 1411, 1526, 1641, 1756]} step={14.375} />
    <PriceAxis xin={1837} x1={1852} y0={94} y1={797} anchor={741} step={11.700} every={10} />
    <AxisText x={1854} y={162}>24 450</AxisText>
    <AxisText x={1854} y={278}>24 400</AxisText>
    <AxisText x={1854} y={396}>24 350</AxisText>
    <AxisText x={1854} y={628}>24 250</AxisText>
    <AxisText x={1854} y={745}>24 200</AxisText>
    <Tag x={1852} y={115} w={56} bg="#ffc800" c="#000">24 468,54</Tag>
    <Tag x={1852} y={166} w={56} bg="#800000" c="#79e4e0">24 446,58</Tag>
    <Tag x={1852} y={508} w={56} bg="#800000" c="#79e4e0">24 299,48</Tag>
    <Tag x={1852} y={570} w={56} bg="#fff" c="#000">24 272,70</Tag>
    <Tag x={1852} y={605} w={56} bg="#800000" c="#79e4e0">24 257,74</Tag>

    <SpreadText x={1370} y={148} textLength={70} lengthAdjust="spacingAndGlyphs">US30</SpreadText>
    <SpreadText x={1526} y={136} textLength={92} lengthAdjust="spacingAndGlyphs">Spread</SpreadText>
    <SpreadText x={1526} y={148} textLength={36} lengthAdjust="spacingAndGlyphs">2.1</SpreadText>
    <SpreadText x={1682} y={136} textLength={108} lengthAdjust="spacingAndGlyphs">S. Value</SpreadText>
    <SpreadText x={1682} y={148} textLength={86} lengthAdjust="spacingAndGlyphs">0.1798</SpreadText>

    <AxisText x={636} y={827}>25/06/2018 09:43</AxisText>
    {[[836, "09:55"], [950, "10:00"], [1065, "10:05"], [1296, "10:15"], [1410, "10:20"], [1526, "10:25"], [1640, "10:30"], [1755, "10:35"]].map(([x, t]) => (
      <AxisText key={t} x={x} y={827} textAnchor="middle">{t}</AxisText>
    ))}
    <Tag x={1152} y={822} w={106} bg="#ffc800" c="#000">25/06/2018 10:11</Tag>

    <Crisp x1={636} y1={841} x2={1837} y2={841} />
    <Crisp x1={636} y1={873} x2={1837} y2={873} />
    <Crisp x1={1837} y1={841} x2={1837} y2={873} />
    <Crisp x1={1852} y1={843} x2={1852} y2={872} />
    {[846, 858, 870].map((y) => <Crisp key={y} x1={1846} y1={y} x2={1852} y2={y} />)}
    {volTops.map((t, i) => {
      const y = 780 + t / 3;
      return <rect key={i} x={645 + i * 23} y={y} width={14} height={872 - y} fill="#c8c8c8" />;
    })}
    <rect x={1082} y={871} width={14} height={1} fill="#c8c8c8" />

    <Crisp x1={636} y1={881} x2={1837} y2={881} />
    <Crisp x1={636} y1={974} x2={1837} y2={974} />
    <Crisp x1={1837} y1={881} x2={1837} y2={974} />
    <Crisp x1={1852} y1={884} x2={1852} y2={976} />
    <Crisp x1={636} y1={904} x2={1836} y2={904} c="#66668e" />
    <Crisp x1={636} y1={953} x2={1836} y2={953} c="#66668e" />
    {[888, 896, 904, 912, 920, 928, 936, 944, 953, 961].map((y) => (
      <Crisp key={y} x1={1846} y1={y} x2={1852} y2={y} />
    ))}
    <Crisp x1={1837} y1={888} x2={1852} y2={888} />
    <Crisp x1={1837} y1={969} x2={1852} y2={969} />
    <Line p={stochRed} f={z7} c="#c41a1a" />
    <Line p={stochGreen} f={z7} c="#35d035" />
    <rect x={1854} y={882} width={21} height={14} fill="#999" />
    <ScaleText x={1855} y={893} $c="#111">100</ScaleText>
    <rect x={1854} y={898} width={14} height={14} fill="#55557c" />
    <ScaleText x={1855} y={909} $c="#15152a">80</ScaleText>
    <rect x={1854} y={946} width={14} height={14} fill="#55557c" />
    <ScaleText x={1855} y={957} $c="#15152a">20</ScaleText>
    <rect x={1854} y={963} width={8} height={13} fill="#888" />
    <ScaleText x={1855} y={974} $c="#111">0</ScaleText>
  </ChartSvg>
);

const TradePanel = () => (
  <Widget>
    <WidgetSide $w={19} $l={1}>S</WidgetSide>
    <Quote $w={72} $l={0}>
      <QuoteSmall>242</QuoteSmall>
      <QuoteBig>70</QuoteBig>
      <QuoteSup>60</QuoteSup>
    </Quote>
    <Qty>1<QtySpin /></Qty>
    <Quote $w={74} $l={6}>
      <QuoteSmall>242</QuoteSmall>
      <QuoteBig>72</QuoteBig>
      <QuoteSup>70</QuoteSup>
    </Quote>
    <WidgetSide $w={10} $l={0}>B</WidgetSide>
  </Widget>
);

export default function App() {
  return (
    <Page>
      <Global />
      <ArrowDefs />
      <LeftColumn>
        <Window $h={477} $pad="0 13px 0 8px" $side>
          <WindowTabs title="US30, m5" top={1} h={26} left={4} right={-1} />
          <WindowBar symbol="US30" frame="m5" on="bid" bars={["#6b7a9a", "#dd8070"]} />
          <ChartBox><M5Chart /></ChartBox>
        </Window>
        <Window $h={492} $top={7} $pad="0 13px 0 8px" $lined $side>
          <WindowTabs title="US30, m15" top={12} h={37} left={4} right={-1} />
          <WindowBar symbol="US30" frame="m15" on="bid" bars={["#6b7a9a", "#dd8070"]} />
          <ChartBox><M15Chart /></ChartBox>
        </Window>
      </LeftColumn>
      <Window $h={976} $pad="0 10px 0 1px">
        <WindowTabs title="US30, m1" hot top={1} h={26} left={4} right={-1} />
        <WindowBar symbol="US30" frame="m1" on="ask" bars={["#3a80d0", "#e8602a"]} wide />
        <ChartBox>
          <M1Chart />
          <TradePanel />
        </ChartBox>
      </Window>
    </Page>
  );
}
